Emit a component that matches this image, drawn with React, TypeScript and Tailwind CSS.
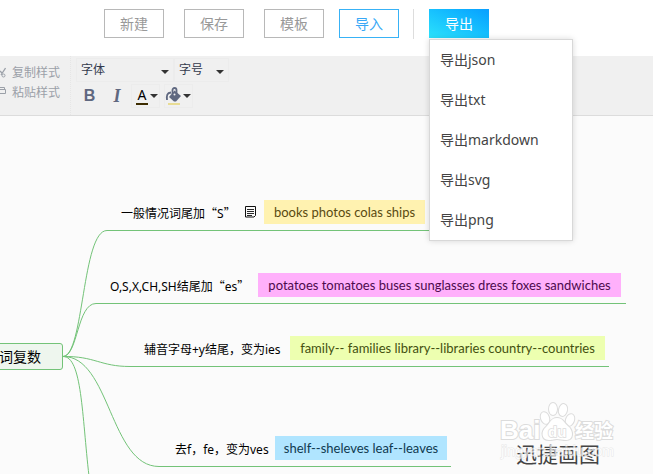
import React from "react";
import { useState } from "react";

type Topic = {
  label: string;
  quoted?: string;
  note: string;
  hasMemo?: boolean;
  position: string;
  color: string;
};

const topics: Topic[] = [
  {
    label: "一般情况词尾加",
    quoted: "S",
    note: "books photos colas ships",
    hasMemo: true,
    position: "left-[121px] top-[84px] w-[304px]",
    color: "w-[161px] bg-[#fff2b0] text-[#5a4b10]",
  },
  {
    label: "O,S,X,CH,SH结尾加",
    quoted: "es",
    note: "potatoes tomatoes buses sunglasses dress foxes sandwiches",
    position: "left-[110px] top-[157px] w-[511px]",
    color: "w-[363px] bg-[#ffb0fb] text-[#4d0a4d]",
  },
  {
    label: "辅音字母+y结尾，变为ies",
    note: "family-- families library--libraries country--countries",
    position: "left-[144px] top-[220px] w-[461px]",
    color: "w-[315px] bg-[#edffb0] text-[#43500f]",
  },
  {
    label: "去f，fe，变为ves",
    note: "shelf--sheleves leaf--leaves",
    position: "left-[175px] top-[320px] w-[272px]",
    color: "w-[172px] bg-[#b0e5ff] text-[#0f3a50]",
  },
];

const links = [
  "M63 240.5C84 240 82 114.5 107 114.5H429",
  "M63 240.5C78 240 77 187.5 96 187.5H626",
  "M63 240.5C95 240 100 250.5 130 250.5H609",
  "M63 240.5C110 240 110 350.5 159 350.5H451",
  "M63 240.5C82 240 82 300 89 360",
];

const formats = ["json", "txt", "markdown", "svg", "png"];

function Caret({ className = "" }: { className?: string }) {
  return (
    <svg
      className={`shrink-0 pointer-events-none ${className}`}
      width="8"
      height="4"
      viewBox="0 0 8 4"
    >
      <path d="M0 0h8L4 4z" fill="#333" />
    </svg>
  );
}

function MemoIcon() {
  return (
    <svg className="shrink-0" width="11" height="12" viewBox="0 0 11 12" fill="none" stroke="#111">
      <path d="M.5.5h10v9l-1.500 1.500h-8.500z" />
      <path d="M2 3.500h7M2 5.500h7M2 7.500h7M2 9.500h5" strokeWidth="0.900" />
    </svg>
  );
}

function Header() {
  const [isOpen, setIsOpen] = useState(true);
  const button = "w-[60px] h-[29px] text-sm border border-[#b8b8b8] text-[#999]";

  return (
    <header className="bg-white h-14 pl-[104px] pt-[9px] flex items-start">
      <div className="flex gap-5">
        <button className={button}>新建</button>
        <button className={button}>保存</button>
        <button className={button}>模板</button>
      </div>
      <button className="ml-[15px] w-[60px] h-[29px] text-sm border border-[#38b2f6] text-[#38a8f6]">
        导入
      </button>
      <div className="ml-[14px] w-px h-[30px] bg-[#ddd]" />
      <div className="ml-[15px] relative">
        <button
          onClick={() => setIsOpen(!isOpen)}
          className="block w-[60px] h-[29px] text-sm text-white bg-linear-to-tr from-[#2de2fb] to-[#0a9fff]"
        >
          导出
        </button>
        {isOpen && (
          <ul className="absolute z-10 left-0 top-[30px] w-36 bg-white border border-[#d8d8d8] shadow-[0_0_6px_rgba(0,0,0,0.15)]">
            {formats.map((format) => (
              <li key={format}>
                <button className="block w-full h-10 pl-[10px] text-left text-sm text-[#444]">
                  导出{format}
                </button>
              </li>
            ))}
          </ul>
        )}
      </div>
    </header>
  );
}

function Toolbar() {
  return (
    <div className="h-[60px] bg-[#f0f0f0] border-b border-[#dcdcdc] flex overflow-hidden">
      <div className="w-[71px] pt-[7px] flex flex-col items-start border-r border-dotted border-[#e6e6e6] text-xs text-[#9ba0a8]">
        <button className="flex items-center gap-[6px] h-5 whitespace-nowrap">
          <svg width="6" height="12" viewBox="0 0 6 12" fill="none" stroke="#9ba0a8">
            <path d="M5.500 1L1 8M0 4l2 2" strokeWidth="1.300" />
            <circle cx="3.500" cy="8.500" r="1.500" />
          </svg>
          复制样式
        </button>
        <button className="flex items-center gap-[6px] h-5 whitespace-nowrap">
          <svg width="6" height="12" viewBox="0 0 6 12" fill="none" stroke="#9ba0a8">
            <path d="M0 .5h4.500v2M0 2.500h5.500v4H0" />
          </svg>
          粘贴样式
        </button>
      </div>
      <div className="pl-[5px] pt-[2px] flex flex-col gap-[2px]">
        <div className="flex">
          <div className="flex items-center w-[98px] h-6 border border-[#ececec]">
            <select
              aria-label="字体"
              className="appearance-none w-full h-5 pl-1 text-xs text-[#333a4d] bg-transparent"
            >
              <option>字体</option>
            </select>
            <Caret className="mr-1 mt-1" />
          </div>
          <div className="flex items-center w-[55px] h-6 border border-[#ececec]">
            <select
              aria-label="字号"
              className="appearance-none w-full h-5 pl-1 text-xs text-[#333a4d] bg-transparent"
            >
              <option>字号</option>
            </select>
            <Caret className="mr-1 mt-1" />
          </div>
        </div>
        <div className="flex items-center h-6 text-[#5f6880]">
          <button className="w-[27px] h-6 text-base font-bold font-['Liberation_Sans',sans-serif]">
            B
          </button>
          <button className="w-7 h-6 text-lg font-bold italic font-['Liberation_Serif',serif] leading-6">
            I
          </button>
          <button
            aria-label="文字颜色"
            className="flex items-center gap-[2px] w-[29px] h-6 pl-1 border border-[#ececec]"
          >
            <span className="w-3 h-[18px] text-sm leading-4 text-black border-b-2 border-[#3d2c00]">
              A
            </span>
            <Caret />
          </button>
          <button
            aria-label="填充颜色"
            className="ml-1 flex items-center w-[29px] h-6 border border-[#ececec]"
          >
            <svg width="18" height="18" viewBox="0 0 18 18">
              <path d="M9.500 3.500L16 9l-5 5.500H9L4 10z" fill="#5f6880" />
              <path
                d="M7.500 7V3a2 2 0 0 1 4 0V7M6 5.500C2 6 1.500 8 2 13"
                fill="none"
                stroke="#5f6880"
                strokeWidth="1.800"
              />
              <circle cx="9.500" cy="7.500" r="1" fill="#f0f0f0" />
              <path d="M3 16h12v2H3z" fill="#e8dc94" />
            </svg>
            <Caret />
          </button>
        </div>
      </div>
    </div>
  );
}

function TopicNode({ topic }: { topic: Topic }) {
  return (
    <div
      className={`absolute flex items-center justify-between text-xs whitespace-nowrap ${topic.position}`}
    >
      <span className="text-black pt-1">
        {topic.label}
        {topic.quoted && (
          <>
            <span lang="zh-CN" className="leading-none font-['Noto_Sans_CJK_SC',sans-serif]">
              “
            </span>
            {topic.quoted}
            <span lang="zh-CN" className="leading-none font-['Noto_Sans_CJK_SC',sans-serif]">
              ”
            </span>
          </>
        )}
      </span>
      <div className="flex items-center gap-2">
        {topic.hasMemo && <MemoIcon />}
        <span
          className={`h-6 text-center text-[13px] leading-6 font-['Lato','Noto_Sans',sans-serif] ${topic.color}`}
        >
          {topic.note}
        </span>
      </div>
    </div>
  );
}

function Watermark() {
  return (
    <svg
      className="absolute left-[498px] top-[284px] pointer-events-none"
      width="124"
      height="62"
      viewBox="0 0 124 62"
      fill="#fff"
      stroke="#dcdcdc"
      strokeWidth="2"
      paintOrder="stroke"
      fontFamily="Liberation Sans, Noto Sans CJK SC, sans-serif"
      fontWeight="bold"
    >
      <text x="2" y="39" fontSize="26">
        Bai
      </text>
      <ellipse cx="47" cy="18" rx="4" ry="6" transform="rotate(-20 47 18)" />
      <ellipse cx="55" cy="9" rx="4" ry="6" />
      <ellipse cx="65" cy="10" rx="4" ry="6" transform="rotate(12 65 10)" />
      <ellipse cx="72" cy="20" rx="4" ry="6" transform="rotate(20 72 20)" />
      <path d="M59 18c-6 0-7 5-11 9-5 4-5 13 3 13 4 0 5-1 8-1s5 1 9 1c8 0 7-9 3-13-5-4-6-9-12-9z" />
      <text x="50" y="37" fontSize="15" strokeWidth="1.500">
        du
      </text>
      <text x="77" y="38" fontSize="19">
        经验
      </text>
      <text
        x="3"
        y="56"
        fontSize="14"
        fontWeight="normal"
        stroke="#dedede"
        strokeWidth="1"
        opacity="0.7"
      >
        jingyan.baidu.com
      </text>
    </svg>
  );
}

function MindMap() {
  return (
    <main className="relative flex-1 bg-[#fbfbfb] overflow-hidden">
      <svg
        className="absolute inset-0 w-full h-full"
        fill="none"
        stroke="#73c378"
        strokeWidth="1"
      >
        {links.map((link) => (
          <path key={link} d={link} />
        ))}
      </svg>
      <div className="absolute left-[-40px] top-[227px] w-[103px] h-[27px] pr-[21px] flex items-center justify-end rounded-[3px] border border-[#73c378] bg-[#eef6ee] text-sm text-black whitespace-nowrap">
        名词复数
      </div>
      {topics.map((topic) => (
        <TopicNode key={topic.label} topic={topic} />
      ))}
      <span className="absolute left-[516px] top-[322px] text-[21px] leading-8 text-[#444] whitespace-nowrap">
        迅捷画图
      </span>
      <Watermark />
    </main>
  );
}

export default function App() {
  return (
    <div className="min-h-screen flex flex-col overflow-hidden font-['Noto_Sans','Noto_Sans_CJK_SC',sans-serif]">
      <Header />
      <Toolbar />
      <MindMap />
    </div>
  );
}
